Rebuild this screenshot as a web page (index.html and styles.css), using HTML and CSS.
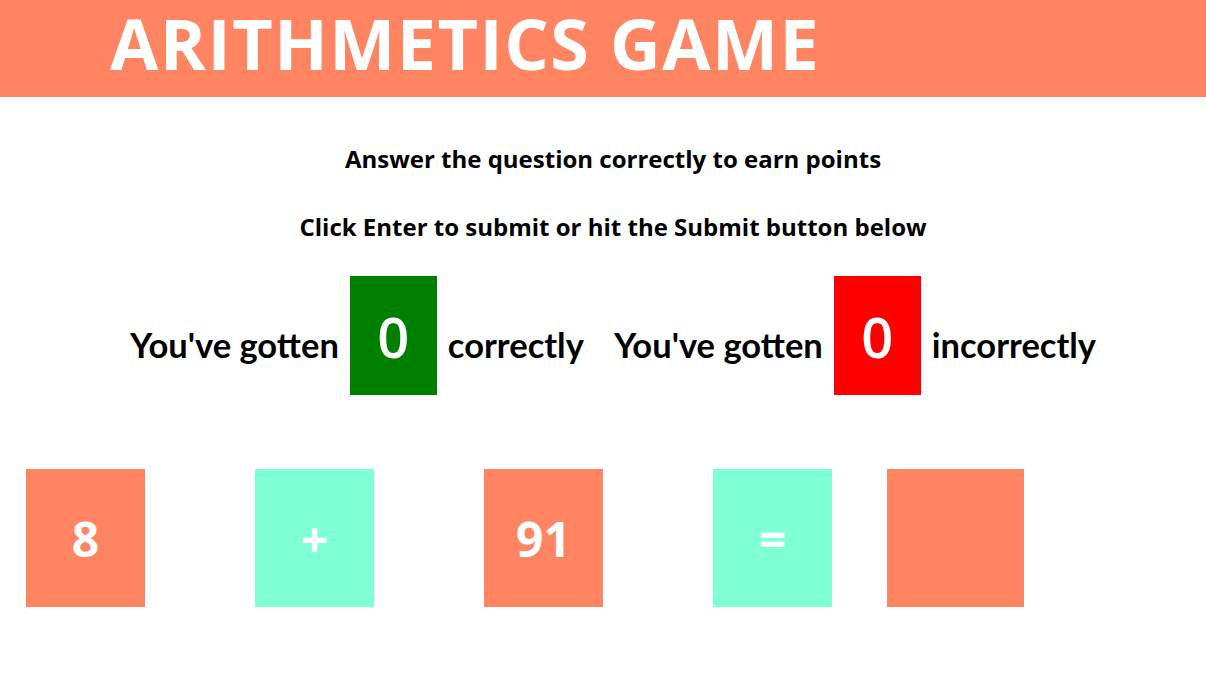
FILE: index.html
```html
<!DOCTYPE html>
<html>
<head>
<meta charset="utf-8">
<link rel="stylesheet" href="styles.css">
</head>
<body>
<header class="header"><h1 class="title">ARITHMETICS GAME</h1></header>
<main class="main">
  <p class="info info-first">Answer the question correctly to earn points</p>
  <p class="info info-second">Click Enter to submit or hit the Submit button below</p>
  <div class="scores">
    <div class="score">
      <span class="score-label">You've gotten</span>
      <span class="score-box score-good">0</span>
      <span class="score-label">correctly</span>
    </div>
    <div class="score">
      <span class="score-label">You've gotten</span>
      <span class="score-box score-bad">0</span>
      <span class="score-label">incorrectly</span>
    </div>
  </div>
  <div class="equation">
    <div class="tile tile-num">8</div>
    <div class="tile tile-op">+</div>
    <div class="tile tile-num">91</div>
    <div class="tile tile-op">=</div>
    <div class="tile tile-answer"></div>
  </div>
</main>
</body>
</html>
```
FILE: styles.css
```css
html, body {
  margin: 0;
  padding: 0;
  background: #ffffff;
}
body {
  font-family: "Lato", "Open Sans", sans-serif;
  color: #000;
}
.header {
  background: #ff8562;
  height: 97px;
  display: flex;
  align-items: center;
}
.title {
  margin: 0;
  padding-left: 110px;
  padding-bottom: 11px;
  color: #fff;
  font-family: "Open Sans", sans-serif;
  font-weight: 700;
  font-size: 70px;
  line-height: 70px;
  letter-spacing: 1.5px;
}
.main {
  display: flex;
  flex-direction: column;
  align-items: stretch;
  padding-left: 20px;
}
.info {
  margin: 0;
  text-align: center;
  font-family: "Open Sans", sans-serif;
  font-weight: 700;
  font-size: 24px;
  line-height: 28px;
}
.info-first {
  margin-top: 48px;
}
.info-second {
  margin-top: 40px;
}
.scores {
  margin-top: 35px;
  display: flex;
  justify-content: center;
  gap: 30px;
}
.score {
  display: flex;
  align-items: baseline;
  gap: 11px;
}
.score-label {
  font-weight: 700;
  font-size: 34.5px;
}
.score-box {
  width: 87px;
  height: 119px;
  display: flex;
  align-items: center;
  justify-content: center;
  color: #fff;
  font-family: "Open Sans", sans-serif;
  font-weight: 600;
  font-size: 56px;
}
.score-good { background: #008000; }
.score-bad { background: #ff0000; }
.equation {
  margin-top: 74px;
  margin-left: -20px;
  padding-left: 26px;
  display: flex;
  gap: 110px;
}
.tile {
  width: 119px;
  height: 138px;
  display: flex;
  align-items: center;
  justify-content: center;
  color: #fff;
  font-family: "Open Sans", sans-serif;
  font-weight: 700;
  font-size: 48px;
}
.tile-num { background: #ff8562; }
.tile-op { background: #7fffd4; }
.tile-answer {
  background: #ff8562;
  width: 137px;
  margin-left: -55px;
}
```
